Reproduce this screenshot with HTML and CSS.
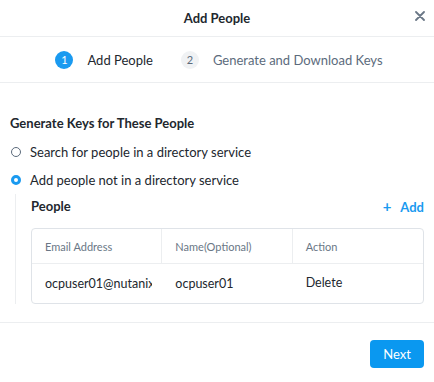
FILE: index.html
```html
<!DOCTYPE html>
<html>
<head>
  <title>Add People</title>
  <link rel="stylesheet" href="styles.css">
</head>
<body>
  <div class="modal">
    <div class="modal-header">
      <h1>Add People</h1>
      <svg class="close" width="10" height="10" viewBox="0 0 10 10">
        <path d="M1 1 L9 9 M9 1 L1 9" stroke="#6a7786" stroke-width="1.8" stroke-linecap="round"/>
      </svg>
    </div>
    <div class="steps">
      <div class="step active"><span class="num">1</span>Add People</div>
      <div class="step"><span class="num">2</span>Generate and Download Keys</div>
    </div>
    <div class="modal-body">
      <h2>Generate Keys for These People</h2>
      <label class="radio"><span class="dot"></span>Search for people in a directory service</label>
      <label class="radio checked"><span class="dot"></span>Add people not in a directory service</label>
      <div class="people">
        <div class="people-head">
          <h3>People</h3>
          <a class="add"><span class="plus">+</span>Add</a>
        </div>
        <table class="people-table">
          <tr>
            <th>Email Address</th>
            <th>Name(Optional)</th>
            <th>Action</th>
          </tr>
          <tr>
            <td><div class="cut">ocpuser01@nutanix.com</div></td>
            <td>ocpuser01</td>
            <td class="action">Delete</td>
          </tr>
        </table>
      </div>
    </div>
    <div class="modal-footer">
      <button class="next">Next</button>
    </div>
  </div>
</body>
</html>
```

FILE: styles.css
```css
body {
  margin: 0;
  font-family: 'Lato', sans-serif;
  color: #22272e;
  background: #fff;
}

.modal {
  width: 434px;
}

.modal-header {
  height: 36px;
  border-bottom: 1px solid #eceef0;
  display: flex;
  align-items: center;
  justify-content: center;
  position: relative;
}

.modal-header h1 {
  margin: 0;
  font-size: 13px;
  font-weight: bold;
}

.close {
  position: absolute;
  right: 9px;
  top: 11px;
}

.steps {
  height: 45px;
  border-bottom: 1px solid #eceef0;
  display: flex;
  align-items: center;
  justify-content: center;
  gap: 28px;
  font-size: 13px;
  padding-left: 4px;
}

.step {
  display: flex;
  align-items: center;
  color: #5c6b7c;
}

.step.active {
  color: #22272e;
}

.num {
  width: 18px;
  height: 18px;
  border-radius: 50%;
  background: #f0f2f4;
  color: #5c6b7c;
  font-size: 11px;
  display: inline-flex;
  align-items: center;
  justify-content: center;
  margin-right: 14px;
}

.step.active .num {
  background: #1a9af0;
  color: #fff;
}

.modal-body {
  padding: 32px 10px 18px 10px;
  border-bottom: 1px solid #eceef0;
}

.modal-body h2 {
  margin: 0 0 7px 0;
  font-size: 13px;
  font-weight: bold;
}

.radio {
  display: flex;
  align-items: center;
  font-size: 13px;
  height: 28px;
}

.dot {
  width: 8px;
  height: 8px;
  border: 1px solid #5c6b7c;
  border-radius: 50%;
  margin: 0 9px 0 1px;
  box-sizing: content-box;
}

.radio.checked .dot {
  border: 3px solid #1a9af0;
  width: 4px;
  height: 4px;
  background: #fff;
}

.people {
  margin: 0 0 0 5px;
  padding: 1px 0 0 15px;
  border-left: 1px solid #eceef0;
}

.people-head {
  display: flex;
  justify-content: space-between;
  align-items: center;
  height: 22px;
  margin-bottom: 11px;
}

.people-head h3 {
  margin: 0;
  font-size: 13px;
  font-weight: bold;
}

.add {
  color: #1a9af0;
  font-size: 13px;
  font-weight: bold;
}

.plus {
  font-size: 15px;
  margin-right: 9px;
}

.people-table {
  width: 100%;
  border-collapse: separate;
  border-spacing: 0;
  border: 1px solid #dfe3e8;
  border-radius: 4px;
  table-layout: fixed;
}

.people-table th {
  text-align: left;
  font-weight: normal;
  font-size: 11px;
  color: #6a7786;
  height: 34px;
  padding: 0 13px;
  border-bottom: 1px solid #eceef0;
  border-right: 1px solid #eceef0;
}

.people-table th:last-child {
  border-right: none;
}

.people-table td {
  font-size: 12.5px;
  height: 36px;
  padding: 0 13px;
  white-space: nowrap;
}

.cut {
  width: 107px;
  overflow: hidden;
}

.people-table td.action {
  padding-bottom: 3px;
}

.modal-footer {
  display: flex;
  justify-content: flex-end;
  padding: 17px 10px;
}

.next {
  background: #0a98f0;
  color: #fff;
  border: none;
  border-radius: 4px;
  font-family: 'Lato', sans-serif;
  font-size: 13px;
  width: 54px;
  height: 28px;
}
```
